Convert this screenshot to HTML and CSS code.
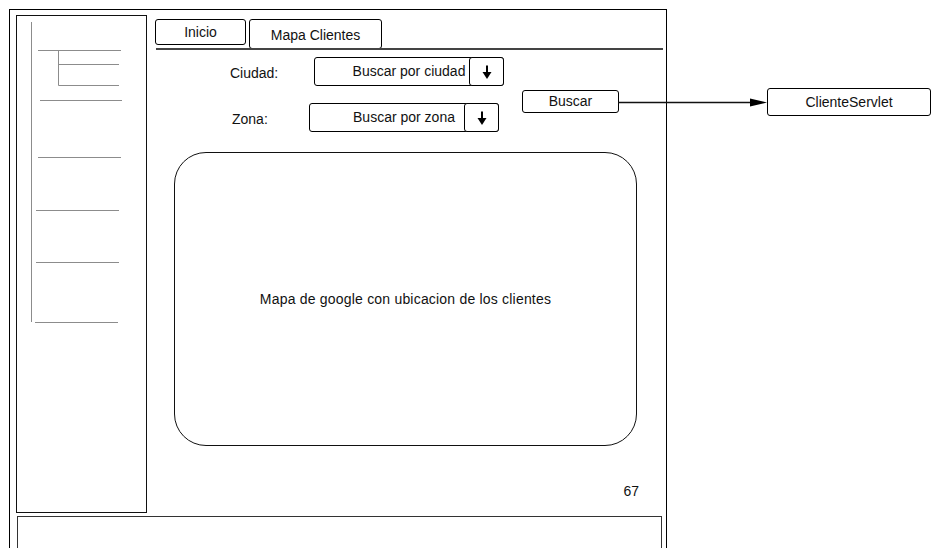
FILE: index.html
```html
<!DOCTYPE html>
<html lang="es">

<head>
    <meta charset="UTF-8">
    <meta name="viewport" content="width=device-width, initial-scale=1.0">
    <title>Mapa Clientes</title>
    <link rel="stylesheet" href="styles.css">
</head>

<body>
    <div class="page">
        <div class="window">
            <div class="window-body">
                <!-- menu lateral (arbol) -->
                <aside class="sidebar">
                    <svg class="tree" width="129" height="496" viewBox="0 0 129 496">
                        <line x1="14.5" y1="6" x2="14.5" y2="306" />
                        <line x1="21" y1="34.5" x2="104" y2="34.5" />
                        <line x1="41.5" y1="34.5" x2="41.5" y2="69.5" />
                        <line x1="41.5" y1="48.5" x2="102" y2="48.5" />
                        <line x1="41.5" y1="69.5" x2="102" y2="69.5" />
                        <line x1="23" y1="84.5" x2="105" y2="84.5" />
                        <line x1="21" y1="141.5" x2="104" y2="141.5" />
                        <line x1="19" y1="194.5" x2="102" y2="194.5" />
                        <line x1="19" y1="246.5" x2="102" y2="246.5" />
                        <line x1="18" y1="306.5" x2="101" y2="306.5" />
                    </svg>
                </aside>

                <main class="main">
                    <nav class="tabs">
                        <div class="tab tab-home">Inicio</div>
                        <div class="tab tab-active">Mapa Clientes</div>
                    </nav>
                    <div class="tab-rule"></div>

                    <div class="search">
                        <div class="search-fields">
                            <div class="field field-city">
                                <span class="field-label">Ciudad:</span>
                                <div class="select">
                                    Buscar por ciudad
                                    <span class="select-btn">
                                        <svg width="12" height="16" viewBox="0 0 12 16">
                                            <line x1="6" y1="1.5" x2="6" y2="10" stroke="#000" stroke-width="2" />
                                            <polygon points="1.5,8 10.5,8 6,15" fill="#000" />
                                        </svg>
                                    </span>
                                </div>
                            </div>
                            <div class="field field-zone">
                                <span class="field-label">Zona:</span>
                                <div class="select">
                                    Buscar por zona
                                    <span class="select-btn">
                                        <svg width="12" height="16" viewBox="0 0 12 16">
                                            <line x1="6" y1="1.5" x2="6" y2="10" stroke="#000" stroke-width="2" />
                                            <polygon points="1.5,8 10.5,8 6,15" fill="#000" />
                                        </svg>
                                    </span>
                                </div>
                            </div>
                        </div>

                        <div class="buscar">
                            Buscar
                            <!-- flecha hacia el servlet -->
                            <div class="link">
                                <svg width="149" height="10" viewBox="0 0 149 10">
                                    <line x1="0" y1="5.5" x2="134" y2="5.5" stroke="#111" stroke-width="1.6" />
                                    <polygon points="132,1.5 149,5.5 132,9.5" fill="#000" />
                                </svg>
                                <div class="servlet">ClienteServlet</div>
                            </div>
                        </div>
                    </div>

                    <div class="map">Mapa de google con ubicacion de los clientes</div>

                    <div class="page-num">67</div>
                </main>
            </div>

            <div class="footer-box"></div>
        </div>
    </div>
</body>

</html>
```

FILE: styles.css
```css
body {
    margin: 0;
    background: #fff;
    font-family: "Liberation Sans", Arial, sans-serif;
    font-size: 14px;
    color: #111;
}
.page {
    position: relative;
    width: 933px;
    height: 548px;
    overflow: hidden;
}
.window {
    box-sizing: border-box;
    width: 658px;
    height: 620px;
    margin: 9px 0 0 9px;
    padding: 5px 0 0 6px;
    border: 1px solid #000;
}
.window-body {
    display: flex;
}
.sidebar {
    box-sizing: border-box;
    width: 131px;
    height: 498px;
    border: 1px solid #111;
}
.tree {
    display: block;
}
.tree line {
    stroke: #8c8c8c;
    stroke-width: 1;
}
.main {
    width: 508px;
    margin-left: 8px;
}
.tabs {
    display: flex;
    align-items: flex-start;
    gap: 3px;
    margin-top: 4px;
    height: 30px;
}
.tab {
    box-sizing: border-box;
    display: flex;
    align-items: center;
    justify-content: center;
    border: 1px solid #000;
    border-radius: 3px;
    background: #fff;
}
.tab-home {
    width: 91px;
    height: 26px;
}
.tab-active {
    width: 133px;
    height: 30px;
    padding-top: 2px;
}
.tab-rule {
    height: 2px;
    width: 507px;
    margin: -1px 0 0 1px;
    background: #444;
    position: relative;
}
.search {
    display: flex;
    align-items: flex-start;
    margin-top: 7px;
}
.search-fields {
    width: 349px;
}
.field {
    display: flex;
    align-items: center;
}
.field + .field {
    margin-top: 17px;
}
.field-city {
    padding-left: 75px;
}
.field-city .field-label {
    width: 84px;
}
.field-zone {
    padding-left: 77px;
}
.field-zone .field-label {
    width: 77px;
}
.field-label {
    padding-top: 2px;
}
.select {
    position: relative;
    box-sizing: border-box;
    width: 190px;
    height: 29px;
    line-height: 27px;
    border: 1px solid #000;
    border-radius: 3px;
    text-align: center;
}
.select-btn {
    position: absolute;
    top: -1px;
    right: -1px;
    box-sizing: border-box;
    width: 35px;
    height: 29px;
    display: flex;
    align-items: center;
    justify-content: center;
    border: 1px solid #000;
    border-radius: 3px;
    background: #fff;
}
.buscar {
    position: relative;
    box-sizing: border-box;
    width: 97px;
    height: 23px;
    line-height: 21px;
    margin: 33px 0 0 18px;
    border: 1px solid #000;
    border-radius: 3px;
    text-align: center;
}
.link {
    position: absolute;
    left: 100%;
    top: 50%;
    transform: translateY(-50%);
    display: flex;
    align-items: center;
}
.link svg {
    display: block;
}
.servlet {
    box-sizing: border-box;
    width: 164px;
    height: 28px;
    line-height: 26px;
    border: 1px solid #000;
    border-radius: 3px;
    text-align: center;
    background: #fff;
}
.map {
    box-sizing: border-box;
    width: 463px;
    height: 294px;
    margin: 20px 0 0 19px;
    display: flex;
    align-items: center;
    justify-content: center;
    border: 1px solid #111;
    border-radius: 32px;
    letter-spacing: 0.2px;
}
.page-num {
    margin-top: 37px;
    padding-right: 24px;
    line-height: 16px;
    text-align: right;
}
.footer-box {
    box-sizing: border-box;
    width: 645px;
    height: 100px;
    margin: 3px 0 0 1px;
    border: 1px solid #333;
}
```
